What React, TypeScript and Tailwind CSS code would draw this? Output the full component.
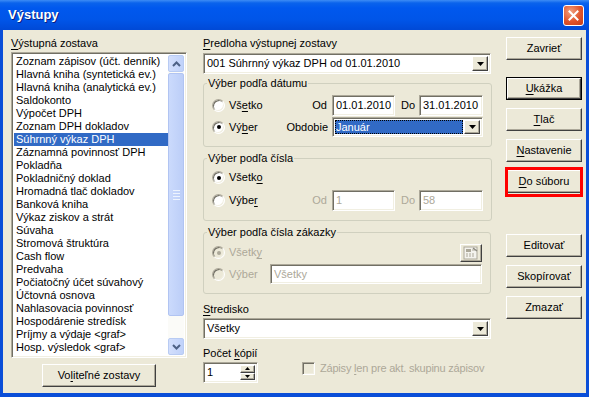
import React from "react";

const items = [
  "Zoznam zápisov (účt. denník)",
  "Hlavná kniha (syntetická ev.)",
  "Hlavná kniha (analytická ev.)",
  "Saldokonto",
  "Výpočet DPH",
  "Zoznam DPH dokladov",
  "Súhrnný výkaz DPH",
  "Záznamná povinnosť DPH",
  "Pokladňa",
  "Pokladničný doklad",
  "Hromadná tlač dokladov",
  "Banková kniha",
  "Výkaz ziskov a strát",
  "Súvaha",
  "Stromová štruktúra",
  "Cash flow",
  "Predvaha",
  "Počiatočný účet súvahový",
  "Účtovná osnova",
  "Nahlasovacia povinnosť",
  "Hospodárenie stredísk",
  "Príjmy a výdaje <graf>",
  "Hosp. výsledok <graf>",
];

const sunken =
  "border border-t-[#ACA899] border-l-[#ACA899] border-r-white border-b-white shadow-[inset_1px_1px_0_#716F64,inset_-1px_-1px_0_#F1EFE2]";
const raised =
  "border border-t-white border-l-white border-r-[#404040] border-b-[#404040] shadow-[inset_-1px_-1px_0_#ACA899] bg-[#ECE9D8]";

function U({ children }: { children: React.ReactNode }) {
  return <span className="underline underline-offset-[2px]">{children}</span>;
}

function Btn({
  children,
  def,
  className = "",
}: {
  children: React.ReactNode;
  def?: boolean;
  className?: string;
}) {
  if (def) {
    return (
      <div className={`h-[23px] border border-black flex font-normal ${className}`}>
        <div className={`flex-1 flex items-center justify-center ${raised}`}>{children}</div>
      </div>
    );
  }
  return (
    <div className={`h-[23px] flex items-center justify-center font-normal ${raised} ${className}`}>
      {children}
    </div>
  );
}

function Arrow() {
  return (
    <svg width="7" height="4" viewBox="0 0 7 4">
      <path d="M0 0h7L3.5 4z" fill="#000" />
    </svg>
  );
}

function DropBtn() {
  return (
    <div className={`w-[16px] h-full flex items-center justify-center ${raised}`}>
      <Arrow />
    </div>
  );
}

function Combo({
  text,
  selected,
  className = "",
}: {
  text: string;
  selected?: boolean;
  className?: string;
}) {
  return (
    <div className={`flex bg-white p-[2px] ${sunken} ${className}`}>
      <div className="flex-1 flex items-center pr-[1px]">
        {selected ? (
          <div className="w-full h-full bg-[#316AC5] text-white flex items-center pl-[1px] outline-dotted outline-1 outline-[#000] -outline-offset-1">
            {text}
          </div>
        ) : (
          <span className="pl-[1px]">{text}</span>
        )}
      </div>
      <DropBtn />
    </div>
  );
}

function Field({
  text,
  disabled,
  className = "",
}: {
  text: string;
  disabled?: boolean;
  className?: string;
}) {
  return (
    <div
      className={`flex items-center bg-white pl-[3px] ${sunken} ${
        disabled ? "text-[#ACA899]" : ""
      } ${className}`}
    >
      {text}
    </div>
  );
}

function Radio({ checked, disabled }: { checked?: boolean; disabled?: boolean }) {
  return (
    <div
      className={`w-[13px] h-[13px] shrink-0 rounded-full flex items-center justify-center border border-t-[#ACA899] border-l-[#ACA899] border-r-white border-b-white shadow-[inset_1px_1px_0_#716F64,inset_-1px_-1px_0_#F1EFE2] ${
        disabled ? "bg-[#ECE9D8]" : "bg-white"
      }`}
    >
      {checked && (
        <div className={`w-[4px] h-[4px] rounded-full ${disabled ? "bg-[#ACA899]" : "bg-black"}`} />
      )}
    </div>
  );
}

function RadioLabel({
  checked,
  disabled,
  children,
}: {
  checked?: boolean;
  disabled?: boolean;
  children: React.ReactNode;
}) {
  return (
    <div className={`flex items-center ${disabled ? "text-[#ACA899]" : ""}`}>
      <Radio checked={checked} disabled={disabled} />
      <span className="ml-[4px]">{children}</span>
    </div>
  );
}

function Group({
  title,
  children,
  className = "",
}: {
  title: string;
  children: React.ReactNode;
  className?: string;
}) {
  return (
    <fieldset className={`border border-[#D0D0BF] rounded-[3px] px-[8px] pb-[9px] ${className}`}>
      <legend className="ml-[-5px] px-[1px] h-[13px] leading-[13px]">{title}</legend>
      {children}
    </fieldset>
  );
}

export default function App() {
  return (
    <div className="w-[589px] h-[397px] flex flex-col bg-[#0A4ED8] font-['Liberation_Sans',Arial,sans-serif] text-[11px] leading-[13px] text-black overflow-hidden">
      {/* Title bar */}
      <div className="h-[30px] shrink-0 flex items-center pl-[8px] pr-[5px] bg-[linear-gradient(to_bottom,#3D8CF5_0px,#0A63EC_3px,#0058EE_8px,#0055E8_20px,#0049D6_30px)]">
        <span className="text-white font-bold text-[13px] leading-[16px] [text-shadow:1px_1px_0_#0A1E80]">
          Výstupy
        </span>
        <div className="ml-auto w-[21px] h-[21px] rounded-[3px] border border-white flex items-center justify-center bg-[radial-gradient(circle_at_35%_30%,#F0A080,#E0542C_55%,#C43D18)]">
          <svg width="11" height="11" viewBox="0 0 11 11">
            <path d="M1.5 1.5l8 8M9.5 1.5l-8 8" stroke="#fff" strokeWidth="2" strokeLinecap="square" />
          </svg>
        </div>
      </div>

      {/* Body */}
      <div className="flex-1 mx-[3px] mb-[4px] bg-[#ECE9D8] flex pl-[8px]">
        {/* Left column */}
        <div className="w-[176px] pt-[7px] flex flex-col">
          <div className="h-[13px]">
            <U>V</U>ýstupná zostava
          </div>
          <div className={`mt-[2px] h-[306px] flex bg-white p-[2px] ${sunken}`}>
            <div className="flex-1 flex flex-col">
              {items.map((it, i) => (
                <div
                  key={it}
                  className={`h-[13px] pl-[2px] whitespace-nowrap ${
                    i === 6 ? "bg-[#316AC5] text-white" : ""
                  }`}
                >
                  {it}
                </div>
              ))}
            </div>
            {/* Scrollbar */}
            <div className="w-[16px] flex flex-col bg-[#FBFBF8]">
              <div className="h-[17px] rounded-[2px] border border-[#B8CBF3] bg-[linear-gradient(to_right,#D3DFFC,#C0D2FA)] flex items-center justify-center">
                <svg width="9" height="6" viewBox="0 0 9 6">
                  <path d="M1 5l3.5-3.5L8 5" stroke="#4D6185" strokeWidth="2" fill="none" />
                </svg>
              </div>
              <div className="flex-1 pt-[1px]">
                <div className="h-[243px] rounded-[2px] border border-[#B1C4F2] bg-[linear-gradient(to_right,#CBDAFC,#BCCEF8)] flex flex-col items-center justify-center gap-[2px]">
                  <div className="w-[7px] h-[1px] bg-[#EEF4FE]" />
                  <div className="w-[7px] h-[1px] bg-[#EEF4FE]" />
                  <div className="w-[7px] h-[1px] bg-[#EEF4FE]" />
                  <div className="w-[7px] h-[1px] bg-[#EEF4FE]" />
                </div>
              </div>
              <div className="h-[17px] rounded-[2px] border border-[#B8CBF3] bg-[linear-gradient(to_right,#D3DFFC,#C0D2FA)] flex items-center justify-center">
                <svg width="9" height="6" viewBox="0 0 9 6">
                  <path d="M1 1l3.5 3.5L8 1" stroke="#4D6185" strokeWidth="2" fill="none" />
                </svg>
              </div>
            </div>
          </div>
          <Btn className="mt-[6px] w-[114px] self-center">
            <span>
              Vo<U>l</U>iteľné zostavy
            </span>
          </Btn>
        </div>

        {/* Middle column */}
        <div className="w-[288px] ml-[16px] pt-[7px] flex flex-col">
          <div className="h-[13px]">
            <U>P</U>redloha výstupnej zostavy
          </div>
          <Combo className="mt-[3px] h-[21px]" text="001 Súhrnný výkaz DPH od 01.01.2010" />

          <Group title="Výber podľa dátumu" className="mt-[3px] pt-[5px]">
            <div className="flex items-center h-[21px]">
              <div className="w-[120px] flex items-center">
                <RadioLabel>
                  Vš<U>e</U>tko
                </RadioLabel>
                <span className="ml-auto pr-[5px]">Od</span>
              </div>
              <Field className="w-[63px] h-[21px]" text="01.01.2010" />
              <span className="w-[24px] pl-[6px]">Do</span>
              <Field className="w-[64px] h-[21px]" text="31.01.2010" />
            </div>
            <div className="flex items-center h-[20px] mt-[1px]">
              <div className="w-[120px] flex items-center">
                <RadioLabel checked>
                  Vý<U>b</U>er
                </RadioLabel>
                <span className="ml-auto pr-[4px]">Obdobie</span>
              </div>
              <Combo className="w-[151px] h-[20px]" text="Január" selected />
            </div>
          </Group>

          <Group title="Výber podľa čísla" className="mt-[5px] pt-[2px]">
            <div className="flex items-center h-[21px]">
              <RadioLabel checked>
                Všetk<U>o</U>
              </RadioLabel>
            </div>
            <div className="flex items-center h-[21px] mt-[2px]">
              <div className="w-[120px] flex items-center">
                <RadioLabel>
                  Výbe<U>r</U>
                </RadioLabel>
                <span className="ml-auto pr-[5px] text-[#ACA899]">Od</span>
              </div>
              <Field disabled className="w-[63px] h-[21px]" text="1" />
              <span className="w-[24px] pl-[6px] text-[#ACA899]">Do</span>
              <Field disabled className="w-[64px] h-[21px]" text="58" />
            </div>
          </Group>

          <Group title="Výber podľa čísla zákazky" className="mt-[5px] pt-[4px]">
            <div className="flex items-center h-[19px]">
              <RadioLabel checked disabled>
                Všetk<U>y</U>
              </RadioLabel>
              <div className={`ml-auto w-[22px] h-[18px] flex items-center justify-center ${raised}`}>
                <svg width="16" height="14" viewBox="0 0 16 14">
                  <rect x="1" y="1" width="13" height="12" fill="#F4F3EE" stroke="#ACA899" />
                  <rect x="3" y="3" width="5" height="3" fill="#ACA899" />
                  <path d="M3 8h2M6 8h2M9 8h2M3 10h2M6 10h2M9 10h2M9 4h3" stroke="#ACA899" strokeWidth="1" />
                  <path d="M10 2l4 3" stroke="#8C8A80" strokeWidth="1.5" />
                </svg>
              </div>
            </div>
            <div className="flex items-center h-[20px] mt-[2px]">
              <div className="w-[58px]">
                <RadioLabel disabled>Výber</RadioLabel>
              </div>
              <Field disabled className="flex-1 h-[20px]" text="Všetky" />
            </div>
          </Group>

          <div className="mt-[9px] h-[13px]">
            <U>S</U>tredisko
          </div>
          <Combo className="mt-[2px] h-[21px]" text="Všetky" />

          <div className="mt-[8px] h-[13px]">
            Počet <U>k</U>ópií
          </div>
          <div className="mt-[2px] flex items-start">
            <div className={`w-[55px] h-[21px] shrink-0 flex bg-white p-[2px] ${sunken}`}>
              <div className="flex-1 pl-[1px] flex items-center">1</div>
              <div className="w-[15px] flex flex-col">
                <div className={`flex-1 flex items-center justify-center ${raised}`}>
                  <svg width="5" height="3" viewBox="0 0 5 3">
                    <path d="M0 3h5L2.5 0z" fill="#000" />
                  </svg>
                </div>
                <div className={`flex-1 flex items-center justify-center ${raised}`}>
                  <svg width="5" height="3" viewBox="0 0 5 3">
                    <path d="M0 0h5L2.5 3z" fill="#000" />
                  </svg>
                </div>
              </div>
            </div>
            <div className="ml-[44px] flex items-center text-[#ACA899] whitespace-nowrap">
              <div className={`w-[13px] h-[13px] shrink-0 bg-[#ECE9D8] ${sunken}`} />
              <span className="ml-[5px] tracking-[-0.2px]">
                Zápisy <U>l</U>en pre akt. skupinu zápisov
              </span>
            </div>
          </div>
        </div>

        {/* Right column */}
        <div className="w-[76px] ml-[15px] pt-[7px] flex flex-col">
          <Btn>Zavrieť</Btn>
          <Btn def className="mt-[17px]">
            <span>
              <U>U</U>kážka
            </span>
          </Btn>
          <Btn className="mt-[8px]">
            <span>
              <U>T</U>lač
            </span>
          </Btn>
          <Btn className="mt-[8px]">
            <span>
              <U>N</U>astavenie
            </span>
          </Btn>
          <div className="relative mt-[8px]">
            <Btn>
              <span>
                <U>D</U>o súboru
              </span>
            </Btn>
            <div className="absolute -left-[1px] -right-[1px] -top-[3px] -bottom-[4px] border-[3px] border-[#FF0000] pointer-events-none" />
          </div>
          <Btn className="mt-[41px]">Editovať</Btn>
          <Btn className="mt-[8px]">Skopírovať</Btn>
          <Btn className="mt-[8px]">Zmazať</Btn>
        </div>
      </div>
    </div>
  );
}
